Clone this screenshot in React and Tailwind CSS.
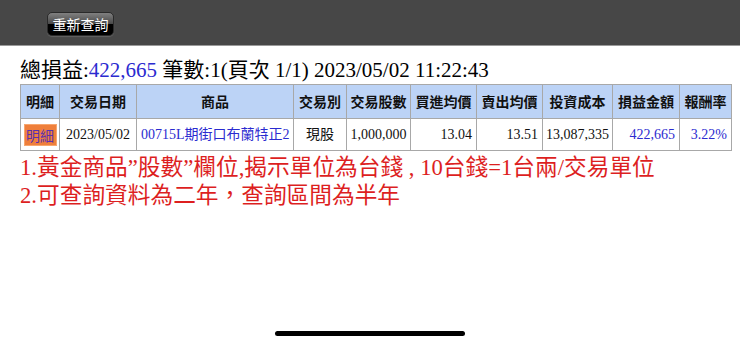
const serif = { fontFamily: '"Liberation Serif", "Noto Sans CJK TC", serif' };

const cols = [
  { label: "明細", w: 39 },
  { label: "交易日期", w: 77 },
  { label: "商品", w: 157 },
  { label: "交易別", w: 53 },
  { label: "交易股數", w: 64 },
  { label: "買進均價", w: 66 },
  { label: "賣出均價", w: 66 },
  { label: "投資成本", w: 70 },
  { label: "損益金額", w: 67 },
  { label: "報酬率", w: 52 },
];

export default function App() {
  return (
    <div className="relative w-[740px] h-[342px] bg-white overflow-hidden" style={serif}>
      {/* top toolbar */}
      <div className="h-[46px] bg-[#474747] border-b border-[#9a9a9a] pl-[47px] pt-[12px]">
        <button
          className="w-[67px] h-[24px] rounded-[5px] border border-[#2a2a2a] bg-[linear-gradient(to_bottom,#808080_0%,#4a4a4a_48%,#000_52%,#000_100%)] text-white text-[14px] leading-[22px] shadow-[0_1px_1px_rgba(255,255,255,0.15)]"
          style={{ fontFamily: '"Noto Sans CJK TC", sans-serif' }}
        >
          重新查詢
        </button>
      </div>

      <div className="pl-[20px]">
        <div className="text-[21px] leading-[26px] mt-[11px] text-black whitespace-nowrap">
          總損益:<span className="text-[#2b2bd0]">422,665</span> 筆數:1(頁次 1/1) 2023/05/02 11:22:43
        </div>

        <table className="mt-[1px] table-fixed border-collapse border border-[#a8a8a8] text-[14px] w-[711px]">
          <colgroup>
            {cols.map((c) => (
              <col key={c.label} style={{ width: c.w }} />
            ))}
          </colgroup>
          <thead>
            <tr className="h-[34px] bg-[#bcd3f6]">
              {cols.map((c) => (
                <th
                  key={c.label}
                  className="border border-[#a8a8a8] font-bold text-[#111] px-0 whitespace-nowrap"
                  style={{ fontFamily: '"Noto Sans CJK TC", sans-serif' }}
                >
                  {c.label}
                </th>
              ))}
            </tr>
          </thead>
          <tbody>
            <tr className="h-[32px] text-[#111] whitespace-nowrap">
              <td className="border border-[#a8a8a8] text-center">
                <span
                  className="inline-block w-[33px] h-[22px] leading-[20px] bg-[#ef7f3b] border border-[#f7a66e] text-[#5a2fb0] text-[14px] align-middle"
                  style={{ fontFamily: '"Noto Sans CJK TC", sans-serif' }}
                >
                  明細
                </span>
              </td>
              <td className="border border-[#a8a8a8] text-center">2023/05/02</td>
              <td className="border border-[#a8a8a8] pl-[4px] text-[#2b2bd0]">00715L期街口布蘭特正2</td>
              <td className="border border-[#a8a8a8] text-center">現股</td>
              <td className="border border-[#a8a8a8] text-center">1,000,000</td>
              <td className="border border-[#a8a8a8] text-right pr-[4px]">13.04</td>
              <td className="border border-[#a8a8a8] text-right pr-[4px]">13.51</td>
              <td className="border border-[#a8a8a8] text-right pr-[3px]">13,087,335</td>
              <td className="border border-[#a8a8a8] text-right pr-[4px] text-[#2b2bd0]">422,665</td>
              <td className="border border-[#a8a8a8] text-right pr-[4px] text-[#2b2bd0]">3.22%</td>
            </tr>
          </tbody>
        </table>

        <div className="mt-[3px] text-[22.7px] leading-[28px] text-[#dd1f1f] whitespace-nowrap">
          <div>1.黃金商品”股數”欄位,揭示單位為台錢 , 10台錢=1台兩/交易單位</div>
          <div>2.可查詢資料為二年，查詢區間為半年</div>
        </div>
      </div>

      {/* home indicator */}
      <div className="absolute left-[275px] top-[331px] w-[190px] h-[5px] rounded-full bg-black" />
    </div>
  );
}
